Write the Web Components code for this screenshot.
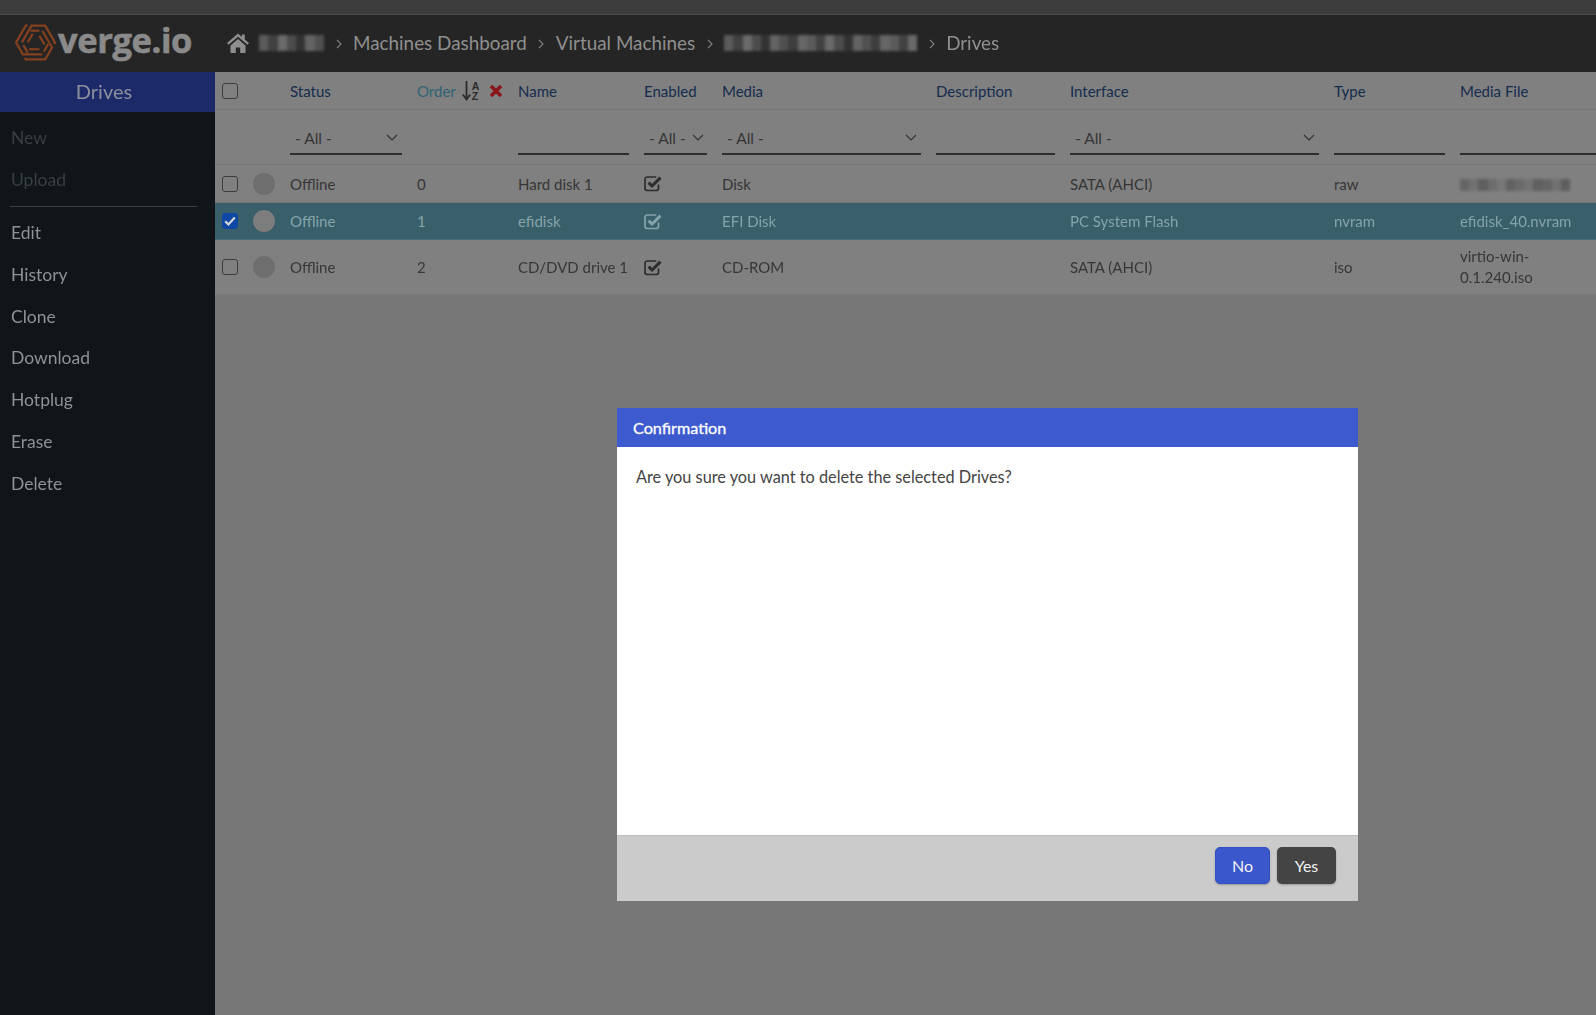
<!DOCTYPE html>
<html>
<head>
<meta charset="utf-8">
<title>Drives</title>
<style>
html, body { margin: 0; height: 100%; background: #777; overflow: hidden; }
body { font-family: "Lato", "Open Sans", sans-serif; }
</style>
</head>
<body>
<vm-app>
  <vm-topbar slot="top">
    <vm-crumb>Machines Dashboard</vm-crumb>
    <vm-crumb>Virtual Machines</vm-crumb>
    <vm-crumb blur="193"></vm-crumb>
    <vm-crumb>Drives</vm-crumb>
  </vm-topbar>
  <vm-sidebar slot="side" title="Drives">
    <side-item disabled>New</side-item>
    <side-item disabled>Upload</side-item>
    <side-rule></side-rule>
    <side-item>Edit</side-item>
    <side-item>History</side-item>
    <side-item>Clone</side-item>
    <side-item>Download</side-item>
    <side-item>Hotplug</side-item>
    <side-item>Erase</side-item>
    <side-item>Delete</side-item>
  </vm-sidebar>
  <drive-table slot="main">
    <drive-row order="0" name="Hard disk 1" media="Disk" iface="SATA (AHCI)" type="raw"><blur-patch width="110" tone="light"></blur-patch></drive-row>
    <drive-row selected order="1" name="efidisk" media="EFI Disk" iface="PC System Flash" type="nvram">efidisk_40.nvram</drive-row>
    <drive-row tall order="2" name="CD/DVD drive 1" media="CD-ROM" iface="SATA (AHCI)" type="iso">virtio-win-<br>0.1.240.iso</drive-row>
  </drive-table>
  <confirm-dialog slot="main" heading="Confirmation">Are you sure you want to delete the selected Drives?</confirm-dialog>
</vm-app>

<script>
const checkSvg = `<svg width="19" height="17" viewBox="0 0 19 17"><path d="M14.5 9.5v3.7a2.3 2.3 0 0 1-2.3 2.3H3.3A2.3 2.3 0 0 1 1 13.2V4.3A2.3 2.3 0 0 1 3.3 2h9" fill="none" stroke="currentColor" stroke-width="1.7"/><path d="M4.6 7.6l3.5 3.4 8.4-8.4" fill="none" stroke="currentColor" stroke-width="3"/></svg>`
const chevron = `<svg width="12" height="7" viewBox="0 0 12 7"><path d="M1 1l5 5 5-5" fill="none" stroke="#333" stroke-width="1.2"/></svg>`
const logoArm = `<path d="M-14 0L-4 -17.3H10L20 0L19 1.7"/><path d="M-5 -12.1H4"/><path d="M-8 0L-2.8 -9"/>`

class VmApp extends HTMLElement {
    constructor() {
        super()
        this.attachShadow({ mode: 'open' }).innerHTML = `
            <style>
                :host{display:grid;grid-template-columns:215px 1fr;grid-template-rows:72px 1fr;height:1015px;width:1596px;overflow:hidden;filter:blur(.4px);}
                .top{grid-column:1 / 3;}
                .main{position:relative;background:#777;overflow:hidden;}
            </style>
            <div class="top"><slot name="top"></slot></div>
            <slot name="side"></slot>
            <div class="main"><slot name="main"></slot></div>
        `
    }
}

class BlurPatch extends HTMLElement {
    constructor() {
        super()
        const w = Number(this.getAttribute('width')) || 70
        const light = this.getAttribute('tone') === 'light'
        const n = Math.round(w / 9)
        let cells = ''
        for (let i = 0; i < n; i++) {
            const a = [.75, .4, .95, .55, .2, .85, .6, .35, .9][i % 9]
            cells += `<i style="opacity:${a}"></i>`
        }
        this.attachShadow({ mode: 'open' }).innerHTML = `
            <style>
                :host{display:inline-block;width:${w}px;height:${light ? 12 : 16}px;vertical-align:middle;}
                div{display:flex;height:100%;filter:blur(${light ? 1.6 : 1.8}px);}
                i{flex:1;background:${light ? '#5c5c5c' : '#6e6e6e'};}
            </style>
            <div>${cells}</div>
        `
    }
}

class VmTopbar extends HTMLElement {
    constructor() {
        super()
        this.attachShadow({ mode: 'open' }).innerHTML = `
            <style>
                :host{display:block;background:#252525;height:72px;color:#8f8f8f;}
                .strip{height:14px;background:#3d3d3d;border-bottom:1px solid #4a4a4a;}
                .bar{height:57px;box-sizing:border-box;padding-bottom:2px;display:flex;align-items:center;}
                .logo{width:212px;padding-left:15px;box-sizing:border-box;display:flex;align-items:center;gap:2px;flex:none;}
                .word{font:700 34.5px/1 "Open Sans",sans-serif;color:#8a8a8a;letter-spacing:-.4px;margin-top:-4px;-webkit-text-stroke:.6px #8a8a8a;}
                .home{width:24px;height:22px;margin:0 9px 0 14px;flex:none;}
                ::slotted(vm-crumb){flex:none;}
            </style>
            <div class="strip"></div>
            <div class="bar">
                <div class="logo">
                    <svg width="41" height="37" viewBox="-21 -19 42 38" fill="none" stroke="#84401f" stroke-width="2.3">
                        <g>${logoArm}</g>
                        <g transform="rotate(120)">${logoArm}</g>
                        <g transform="rotate(240)">${logoArm}</g>
                    </svg>
                    <span class="word">verge.io</span>
                </div>
                <svg class="home" viewBox="0 0 24 22"><path d="M12 1.5L1 11l1.5 1.8L12 4.8l9.5 8L23 11l-4.2-3.6V2.5h-3v2.4z" fill="#8f8f8f"/><path d="M4.5 13.5L12 7l7.5 6.5V21h-5.3v-5.5H9.8V21H4.5z" fill="#8f8f8f"/></svg>
                <blur-patch width="65"></blur-patch>
                <slot></slot>
            </div>
        `
    }
}

class VmCrumb extends HTMLElement {
    constructor() {
        super()
        const blur = this.getAttribute('blur')
        this.attachShadow({ mode: 'open' }).innerHTML = `
            <style>
                :host{display:inline-flex;align-items:center;font-size:18.85px;color:#8f8f8f;}
                svg{margin:2px 11.5px 0 11.5px;}
            </style>
            <svg width="6" height="10" viewBox="0 0 6 10"><path d="M1 1l4 4-4 4" fill="none" stroke="#7d7d7d" stroke-width="1.2"/></svg>
            ${blur ? `<blur-patch width="${blur}"></blur-patch>` : '<slot></slot>'}
        `
    }
}

class VmSidebar extends HTMLElement {
    constructor() {
        super()
        this.attachShadow({ mode: 'open' }).innerHTML = `
            <style>
                :host{display:block;background:#0f1519;}
                h2{margin:0;height:40px;line-height:39px;background:#1c2a6a;color:#8d8f9d;text-align:center;font-size:20px;font-weight:400;padding-right:7px;}
                .list{display:flex;flex-direction:column;padding-top:5px;}
            </style>
            <h2>${this.getAttribute('title')}</h2>
            <div class="list"><slot></slot></div>
        `
    }
}

class SideItem extends HTMLElement {
    constructor() {
        super()
        this.attachShadow({ mode: 'open' }).innerHTML = `
            <style>
                :host{display:block;height:41.9px;line-height:41.9px;padding-left:11px;font-size:17.5px;color:#8f9193;}
                :host([disabled]){color:#3a3f43;}
            </style>
            <slot></slot>
        `
    }
}

class SideRule extends HTMLElement {
    constructor() {
        super()
        this.attachShadow({ mode: 'open' }).innerHTML = `
            <style>
                :host{display:block;height:1px;margin:5px 18px 5px 10px;background:#3c4145;}
            </style>
        `
    }
}

class DriveTable extends HTMLElement {
    constructor() {
        super()
        const heads = [['Status'], ['Order', 'on'], ['Name'], ['Enabled'], ['Media'], ['Description'], ['Interface'], ['Type'], ['Media File']]
        const sort = `<span class="sort"><svg width="9" height="20" viewBox="0 0 9 20"><path d="M4.5 0v17M.8 13.5l3.7 5 3.7-5" fill="none" stroke="#2b2b2b" stroke-width="1.8"/></svg><span class="az"><b>A</b><b>Z</b></span></span><svg class="x" width="14" height="14" viewBox="0 0 14 14"><path d="M2 2l10 10M12 2L2 12" stroke="#8a1418" stroke-width="3.6"/></svg>`
        const headCells = heads.map(([h, on]) => `<div class="h ${on ? 'on' : ''}"><span>${h}</span>${on ? sort : ''}</div>`).join('')
        this.attachShadow({ mode: 'open' }).innerHTML = `
            <style>
                :host{display:block;--cols:38px 37px 127px 101px 126px 78px 214px 134px 264px 126px 140px;}
                .row{display:grid;grid-template-columns:var(--cols);background:#808080;align-items:center;width:1460px;}
                .head{height:38px;border-bottom:1px solid #767676;box-sizing:border-box;}
                .filter{height:55px;border-bottom:1px solid #767676;box-sizing:border-box;align-items:start;}
                .h{font-size:15px;color:#152c4e;white-space:nowrap;display:flex;align-items:center;}
                .h.on{color:#2f6475;}
                .sort{display:inline-flex;margin-left:6px;gap:1px;align-items:center;}
                .az{display:flex;flex-direction:column;font:700 10.5px/10px "Liberation Sans",sans-serif;color:#2b2b2b;}
                .az b{display:block;}
                .x{margin-left:10px;}
                .box{width:16px;height:16px;margin-left:7px;box-sizing:border-box;border:1.5px solid #3c3c3c;border-radius:3px;}
                .f{margin:14px 15.5px 0 0;height:29px;border-bottom:2px solid #2d2d2d;display:flex;align-items:center;justify-content:space-between;font-size:15.5px;color:#363636;}
                .f span{padding:0 0 2px 5px;}
                .f svg{margin:-2px 4px 0 0;}
                .f.sm svg{margin-right:3px;}
            </style>
            <div class="row head">
                <div class="box"></div><div></div>
                ${headCells}
            </div>
            <div class="row filter">
                <div></div><div></div>
                <div class="f"><span>- All -</span>${chevron}</div>
                <div></div>
                <div class="f"></div>
                <div class="f sm"><span>- All -</span>${chevron}</div>
                <div class="f"><span>- All -</span>${chevron}</div>
                <div class="f"></div>
                <div class="f"><span>- All -</span>${chevron}</div>
                <div class="f"></div>
                <div class="f" style="margin-right:0"></div>
            </div>
            <slot></slot>
        `
    }
}

class DriveRow extends HTMLElement {
    constructor() {
        super()
        const a = n => this.getAttribute(n) || ''
        const sel = this.hasAttribute('selected')
        this.attachShadow({ mode: 'open' }).innerHTML = `
            <style>
                :host{display:grid;grid-template-columns:var(--cols);align-items:center;height:38px;box-sizing:border-box;width:1460px;background:#808080;font-size:15px;color:#363636;border-bottom:1px solid #767676;}
                :host([selected]){background:#385f6a;color:#85a3ab;height:37px;border-bottom:1px solid #4b6e78;}
                :host([tall]){height:54px;border-bottom:0;box-shadow:0 1px 0 #7b7b7b;}
                .box{width:16px;height:16px;margin-left:7px;box-sizing:border-box;border:1.5px solid #3c3c3c;border-radius:3px;}
                .box.on{background:#0e47a6;border-color:#0e47a6;display:flex;align-items:center;justify-content:center;}
                .dot{width:22px;height:22px;border-radius:50%;background:#6e6e6e;}
                :host([selected]) .dot{background:#7d7d7d;}
                .en{display:flex;color:#2d2d2d;}
                :host([selected]) .en{color:#85a3ab;}
                .file{line-height:21px;}
            </style>
            <div class="box ${sel ? 'on' : ''}">${sel ? '<svg width="12" height="10" viewBox="0 0 12 10"><path d="M1.2 5.2l3.2 3.2 6.4-7" fill="none" stroke="#d6d6d6" stroke-width="2.2"/></svg>' : ''}</div>
            <div class="dot"></div>
            <div>Offline</div>
            <div>${a('order')}</div>
            <div>${a('name')}</div>
            <div class="en">${checkSvg}</div>
            <div>${a('media')}</div>
            <div></div>
            <div>${a('iface')}</div>
            <div>${a('type')}</div>
            <div class="file"><slot></slot></div>
        `
    }
}

class ConfirmDialog extends HTMLElement {
    constructor() {
        super()
        this.attachShadow({ mode: 'open' }).innerHTML = `
            <style>
                :host{position:absolute;left:402px;top:336px;width:741px;height:493px;display:flex;flex-direction:column;background:#fff;font-size:16.3px;}
                header{height:39px;line-height:39px;background:#3d5bce;color:#fff;padding-left:16px;font-size:16.2px;-webkit-text-stroke:.3px #fff;box-sizing:border-box;}
                .body{flex:1;padding:19px 19px;color:#444;line-height:22px;}
                footer{height:66px;box-sizing:border-box;background:#cbcbcb;border-top:1px solid #bdbdbd;display:flex;justify-content:flex-end;align-items:flex-start;gap:7px;padding:11px 22px 0 0;}
            </style>
            <header>${this.getAttribute('heading')}</header>
            <div class="body"><slot></slot></div>
            <footer><dlg-button kind="primary">No</dlg-button><dlg-button>Yes</dlg-button></footer>
        `
    }
}

class DlgButton extends HTMLElement {
    constructor() {
        super()
        this.attachShadow({ mode: 'open' }).innerHTML = `
            <style>
                :host{display:flex;align-items:center;justify-content:center;height:37px;width:59px;box-sizing:border-box;border-radius:5px;background:#444;color:#f2f2f2;font-size:16px;box-shadow:0 1px 2px rgba(0,0,0,.25);}
                :host([kind=primary]){width:55px;background:#3a57cc;border:1px solid #3350bf;}
            </style>
            <slot></slot>
        `
    }
}

customElements.define('blur-patch', BlurPatch)
customElements.define('vm-app', VmApp)
customElements.define('vm-topbar', VmTopbar)
customElements.define('vm-crumb', VmCrumb)
customElements.define('vm-sidebar', VmSidebar)
customElements.define('side-item', SideItem)
customElements.define('side-rule', SideRule)
customElements.define('drive-table', DriveTable)
customElements.define('drive-row', DriveRow)
customElements.define('dlg-button', DlgButton)
customElements.define('confirm-dialog', ConfirmDialog)
</script>
</body>
</html>
